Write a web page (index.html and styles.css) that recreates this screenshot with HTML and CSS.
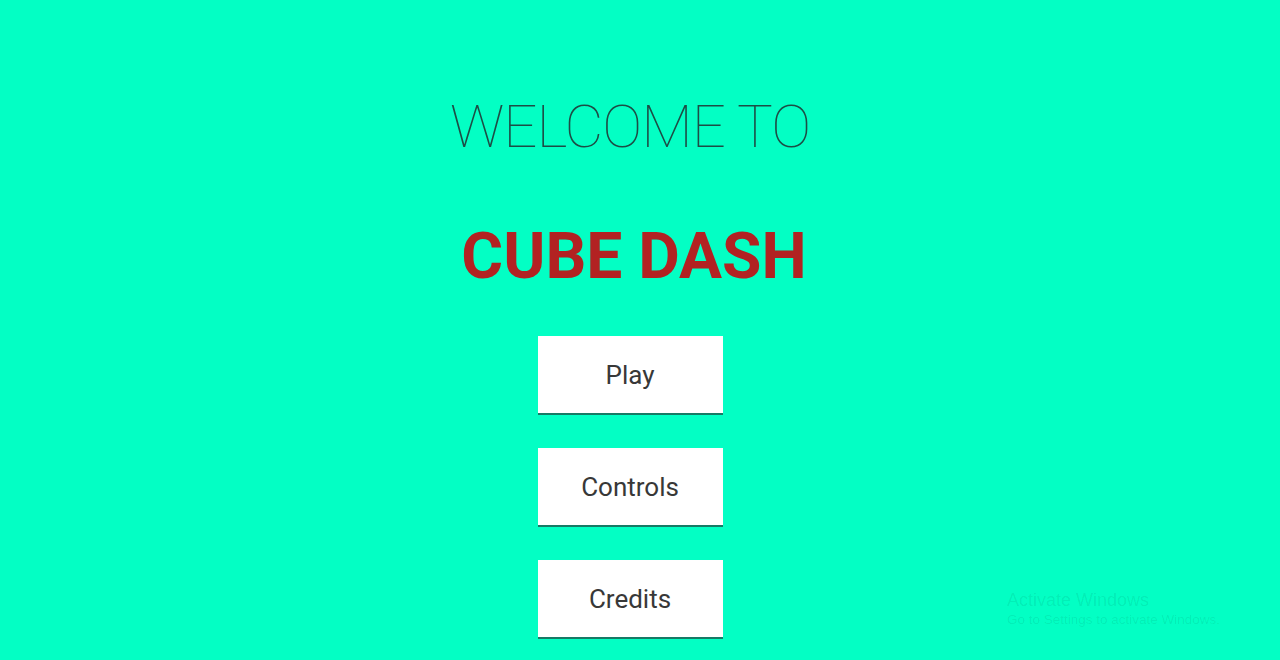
FILE: index.html
```html
<!DOCTYPE html>
<html lang="en">
<head>
<meta charset="utf-8">
<title>Cube Dash</title>
<link rel="stylesheet" href="styles.css">
</head>
<body>
<main class="menu">
  <h1 class="welcome">WELCOME TO</h1>
  <h2 class="title">CUBE DASH</h2>
  <div class="buttons">
    <button class="btn">Play</button>
    <button class="btn">Controls</button>
    <button class="btn">Credits</button>
  </div>
</main>
<div class="watermark">
  <div class="wm-title">Activate Windows</div>
  <div class="wm-sub">Go to Settings to activate Windows.</div>
</div>
</body>
</html>
```

FILE: styles.css
```css
html, body {
  margin: 0;
  padding: 0;
  height: 100%;
  overflow: hidden;
}
body {
  background: #03ffc4;
  font-family: Roboto, "Liberation Sans", sans-serif;
}
.menu {
  display: flex;
  flex-direction: column;
  align-items: center;
  padding-top: 97px;
  padding-right: 20px;
}
.welcome {
  margin: 0;
  font-size: 60px;
  line-height: 60px;
  font-weight: 100;
  color: #1d4d45;
  letter-spacing: -1px;
}
.title {
  margin: 68px 0 0 8px;
  font-size: 64px;
  line-height: 64px;
  font-weight: 700;
  color: #b22222;
}
.buttons {
  display: flex;
  flex-direction: column;
  align-items: center;
  gap: 35px;
  margin-top: 47px;
}
.btn {
  width: 185px;
  height: 77px;
  border: none;
  background: #ffffff;
  color: #383838;
  font-family: Roboto, "Liberation Sans", sans-serif;
  font-size: 26px;
  font-weight: 400;
  box-shadow: 0 2px 0 #177a65;
  padding: 0;
  cursor: pointer;
}
.watermark {
  position: absolute;
  left: 1007px;
  top: 589px;
  color: rgba(0, 0, 0, 0.08);
  font-family: "Liberation Sans", sans-serif;
}
.wm-title {
  font-size: 18px;
  line-height: 22px;
}
.wm-sub {
  font-size: 13.5px;
  line-height: 18px;
}
```
